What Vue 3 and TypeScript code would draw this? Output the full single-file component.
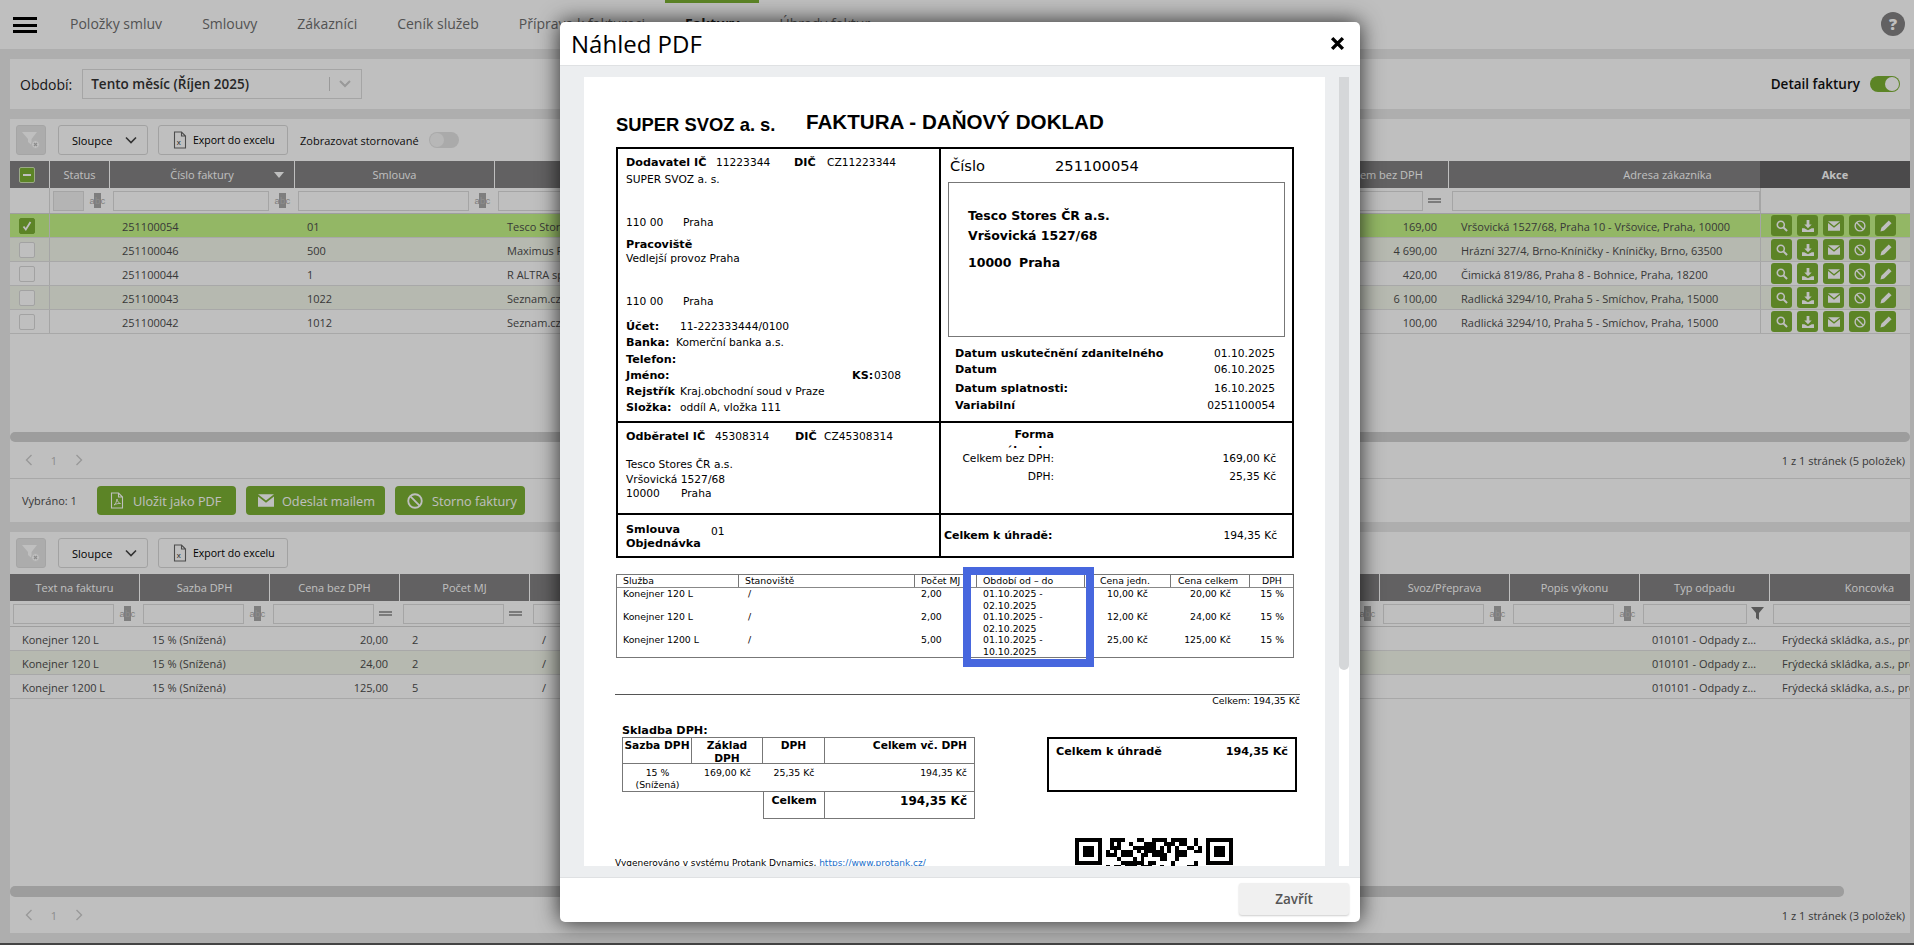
<script setup lang="ts">
interface Col { label: string; filter: '' | 'abc' | 'eq' | 'fun' | 'none'; align?: string }

const navItems = ['Položky smluv', 'Smlouvy', 'Zákazníci', 'Ceník služeb', 'Příprava k fakturaci', 'Faktury', 'Úhrady faktur']

const upperCols: Col[] = [
  { label: 'Status', filter: 'abc' },
  { label: 'Číslo faktury', filter: 'abc' },
  { label: 'Smlouva', filter: 'abc' },
  { label: 'Zákazník', filter: 'abc' },
  { label: 'Celkem bez DPH', filter: 'eq', align: 'r' },
  { label: 'Adresa zákazníka', filter: '' },
]
const upperRows = [
  ['', '251100054', '01', 'Tesco Stores ČR a.s.', '169,00', 'Vršovická 1527/68, Praha 10 - Vršovice, Praha, 10000'],
  ['', '251100046', '500', 'Maximus Facility s.r.o.', '4 690,00', 'Hrázní 327/4, Brno-Kníničky - Kníničky, Brno, 63500'],
  ['', '251100044', '1', 'R ALTRA spol. s r.o.', '420,00', 'Čimická 819/86, Praha 8 - Bohnice, Praha, 18200'],
  ['', '251100043', '1022', 'Seznam.cz, a.s.', '6 100,00', 'Radlická 3294/10, Praha 5 - Smíchov, Praha, 15000'],
  ['', '251100042', '1012', 'Seznam.cz, a.s.', '100,00', 'Radlická 3294/10, Praha 5 - Smíchov, Praha, 15000'],
]
const lowerCols: Col[] = [
  { label: 'Text na fakturu', filter: 'abc' },
  { label: 'Sazba DPH', filter: 'abc' },
  { label: 'Cena bez DPH', filter: 'eq', align: 'r' },
  { label: 'Počet MJ', filter: 'eq' },
  { label: 'Stanoviště', filter: 'abc' },
  { label: 'Svoz/Přeprava', filter: 'abc' },
  { label: 'Popis výkonu', filter: 'abc' },
  { label: 'Typ odpadu', filter: 'fun' },
  { label: 'Koncovka', filter: '' },
]
const waste = '010101 - Odpady z ...'
const end = 'Frýdecká skládka, a.s., provozovna Lipina'
const lowerRows = [
  ['Konejner 120 L', '15 % (Snížená)', '20,00', '2', ' /', '', '', waste, end],
  ['Konejner 120 L', '15 % (Snížená)', '24,00', '2', ' /', '', '', waste, end],
  ['Konejner 1200 L', '15 % (Snížená)', '125,00', '5', ' /', '', '', waste, end],
]

const itemRows = [
  { name: 'Konejner 120 L', qty: '2,00', from: '01.10.2025 -', to: '02.10.2025', unit: '10,00 Kč', sum: '20,00 Kč' },
  { name: 'Konejner 120 L', qty: '2,00', from: '01.10.2025 -', to: '02.10.2025', unit: '12,00 Kč', sum: '24,00 Kč' },
  { name: 'Konejner 1200 L', qty: '5,00', from: '01.10.2025 -', to: '10.10.2025', unit: '25,00 Kč', sum: '125,00 Kč' },
]

// QR code modules: finder squares plus a seeded pseudo-random fill
function buildQr(n: number): string {
  let seed = 90210
  const rnd = () => {
    seed = (seed * 1103515245 + 12345) & 0x7fffffff
    return (seed >> 16) & 1
  }
  const finder = (x: number, y: number, ox: number, oy: number) => {
    const i = x - ox
    const j = y - oy
    if (i < 0 || j < 0 || i > 6 || j > 6) return -1
    const ring = i === 0 || j === 0 || i === 6 || j === 6
    const core = i >= 2 && i <= 4 && j >= 2 && j <= 4
    return ring || core ? 1 : 0
  }
  let d = ''
  for (let y = 0; y < n; y++) {
    for (let x = 0; x < n; x++) {
      let v = -1
      for (const [ox, oy] of [[0, 0], [n - 7, 0], [0, n - 7]]) {
        const f = finder(x, y, ox, oy)
        if (f >= 0) v = f
      }
      const quiet = (x <= 7 && y <= 7) || (x >= n - 8 && y <= 7) || (x <= 7 && y >= n - 8)
      if (v < 0) v = quiet ? 0 : rnd()
      if (v) d += `M${x} ${y}h1v1h-1z`
    }
  }
  return d
}
const qrPath = buildQr(41)
</script>

<template>
  <div class="page">
    <nav class="nav">
      <div class="burger"><i></i><i></i><i></i></div>
      <a v-for="n in navItems" :key="n" class="nav-item" :class="{ active: n === 'Faktury' }">{{ n }}</a>
      <div class="help">?</div>
    </nav>

    <div class="content">
      <section class="panel period">
        <span class="period-label">Období:</span>
        <div class="select">
          <span class="select-text">Tento měsíc (Říjen 2025)</span>
          <span class="select-sep"></span>
          <svg width="14" height="14" viewBox="0 0 14 14" class="select-chev"><path d="M2 4l5 5 5-5" fill="none" stroke="#ccc" stroke-width="2"/></svg>
        </div>
        <div class="detail">
          <span>Detail faktury</span>
          <span class="toggle on"><i></i></span>
        </div>
      </section>

      <section class="panel grid-panel upper">
        <div class="toolbar">
          <button class="filter-btn">
            <svg width="18" height="18" viewBox="0 0 18 18"><path d="M0 1h15L9.500 8v6L6 11V8z" fill="#fff"/><circle cx="13.500" cy="13.500" r="4" fill="#fff" stroke="#e5e5e5"/><path d="M12 12l3 3m0-3l-3 3" stroke="#bbb" stroke-width="1.200"/></svg>
          </button>
          <button class="tool-btn sloupce">Sloupce
            <svg width="12" height="12" viewBox="0 0 12 12"><path d="M1 3.500l5 5 5-5" fill="none" stroke="#444" stroke-width="1.600"/></svg>
          </button>
          <button class="tool-btn export">
            <svg width="14" height="18" viewBox="0 0 14 18"><path d="M1.500 1h7l4 4v12h-11zM8.500 1v4h4" fill="none" stroke="#666" stroke-width="1.100"/><text x="3.800" y="14" font-size="8" fill="#333" font-family="Liberation Sans, sans-serif">x</text></svg>
            Export do excelu
          </button>
          <span class="storno-label">Zobrazovat stornované</span>
          <span class="toggle"><i></i></span>
        </div>

        <div class="row head">
          <div class="c chk-c"><span class="box mixed"><i></i></span></div>
          <div v-for="c in upperCols" :key="c.label" class="c h" :class="{ addr: c.label === 'Adresa zákazníka', bez: c.label === 'Celkem bez DPH' }">
            {{ c.label }}
            <span v-if="c.label === 'Číslo faktury'" class="caret"></span>
          </div>
          <div class="c h akce">Akce</div>
        </div>
        <div class="row filt">
          <div class="c chk-c"></div>
          <div v-for="(c, i) in upperCols" :key="c.label" class="c f">
            <span class="inp" :class="{ dis: i === 0 }"></span>
            <span v-if="c.filter === 'abc'" class="abc">a<b>b</b>c</span>
            <span v-if="c.filter === 'eq'" class="eq"></span>
          </div>
          <div class="c sticky"></div>
        </div>
        <div v-for="(r, ri) in upperRows" :key="ri" class="row data" :class="{ sel: ri === 0, alt: ri % 2 === 1 }">
          <div class="c chk-c">
            <span class="box" :class="{ checked: ri === 0 }">
              <svg v-if="ri === 0" width="12" height="12" viewBox="0 0 12 12"><path d="M2.500 6.500l2.300 3L9.500 2" fill="none" stroke="#fff" stroke-width="1.800"/></svg>
            </span>
          </div>
          <div v-for="(v, i) in r" :key="i" class="c d" :class="{ r: upperCols[i].align === 'r' }">{{ v }}</div>
          <div class="c sticky actions">
            <span class="act"><svg width="12" height="12" viewBox="0 0 13 13"><circle cx="5.200" cy="5.200" r="3.800" fill="none" stroke="#fff" stroke-width="1.700"/><path d="M8 8l4 4" stroke="#fff" stroke-width="2.200"/></svg></span>
            <span class="act"><svg width="12" height="12" viewBox="0 0 13 13"><path d="M5 0h3v5h2.500L6.500 9 2.500 5H5zM0 9h2.500l4 2 4-2H13v4H0z" fill="#fff"/></svg></span>
            <span class="act"><svg width="12" height="10" viewBox="0 0 14 11"><path d="M0 0h14L7 5.500zM0 2l7 5.500L14 2v9H0z" fill="#fff"/></svg></span>
            <span class="act"><svg width="12" height="12" viewBox="0 0 13 13"><circle cx="6.500" cy="6.500" r="5.300" fill="none" stroke="#fff" stroke-width="1.500"/><path d="M2.800 2.800l7.400 7.400" stroke="#fff" stroke-width="1.500"/></svg></span>
            <span class="act"><svg width="12" height="12" viewBox="0 0 13 13"><path d="M9.500.5l3 3L4.500 11.500 0.500 12.500l1-4z" fill="#fff"/></svg></span>
          </div>
        </div>
        <div class="spacer"></div>
        <div class="hscroll"><i class="thumb-u"></i></div>
        <div class="pager">
          <span class="pg"><svg width="8" height="12" viewBox="0 0 8 12"><path d="M6.500 1L1.500 6l5 5" fill="none" stroke="#ccc" stroke-width="1.400"/></svg></span>
          <span class="pg num">1</span>
          <span class="pg"><svg width="8" height="12" viewBox="0 0 8 12"><path d="M1.500 1l5 5-5 5" fill="none" stroke="#ccc" stroke-width="1.400"/></svg></span>
          <span class="pg-info">1 z 1 stránek (5 položek)</span>
        </div>
        <div class="actionbar">
          <span class="sel-count">Vybráno: 1</span>
          <button class="gbtn pdf">
            <svg width="14" height="17" viewBox="0 0 14 17"><path d="M1.500 1h7l4 4v11h-11zM8.500 1v4h4" fill="none" stroke="#fff" stroke-width="1.100"/><path d="M4 13c1.500-1 2.500-3 3-6 .5 2.500 1.500 4 3.500 4.500-2-.2-4.500.3-6.500 1.500z" fill="none" stroke="#fff" stroke-width=".9"/></svg>
            Uložit jako PDF
          </button>
          <button class="gbtn mail">
            <svg width="16" height="13" viewBox="0 0 14 11"><path d="M0 0h14L7 5.500zM0 2l7 5.500L14 2v9H0z" fill="#fff"/></svg>
            Odeslat mailem
          </button>
          <button class="gbtn storno">
            <svg width="16" height="16" viewBox="0 0 13 13"><circle cx="6.500" cy="6.500" r="5.500" fill="none" stroke="#fff" stroke-width="1.500"/><path d="M2.800 2.800l7.400 7.400" stroke="#fff" stroke-width="1.500"/></svg>
            Storno faktury
          </button>
        </div>
      </section>

      <section class="panel grid-panel lower">
        <div class="toolbar">
          <button class="filter-btn">
            <svg width="18" height="18" viewBox="0 0 18 18"><path d="M0 1h15L9.500 8v6L6 11V8z" fill="#fff"/><circle cx="13.500" cy="13.500" r="4" fill="#fff" stroke="#e5e5e5"/><path d="M12 12l3 3m0-3l-3 3" stroke="#bbb" stroke-width="1.200"/></svg>
          </button>
          <button class="tool-btn sloupce">Sloupce
            <svg width="12" height="12" viewBox="0 0 12 12"><path d="M1 3.500l5 5 5-5" fill="none" stroke="#444" stroke-width="1.600"/></svg>
          </button>
          <button class="tool-btn export">
            <svg width="14" height="18" viewBox="0 0 14 18"><path d="M1.500 1h7l4 4v12h-11zM8.500 1v4h4" fill="none" stroke="#666" stroke-width="1.100"/><text x="3.800" y="14" font-size="8" fill="#333" font-family="Liberation Sans, sans-serif">x</text></svg>
            Export do excelu
          </button>
        </div>
        <div class="row head">
          <div v-for="c in lowerCols" :key="c.label" class="c h">{{ c.label }}</div>
        </div>
        <div class="row filt">
          <div v-for="c in lowerCols" :key="c.label" class="c f">
            <span class="inp"></span>
            <span v-if="c.filter === 'abc'" class="abc">a<b>b</b>c</span>
            <span v-if="c.filter === 'eq'" class="eq"></span>
            <svg v-if="c.filter === 'fun'" class="fun" width="13" height="13" viewBox="0 0 13 13"><path d="M0 0h13L8 6v7L5 11V6z" fill="#777"/></svg>
          </div>
        </div>
        <div v-for="(r, ri) in lowerRows" :key="ri" class="row data" :class="{ alt: ri === 1 }">
          <div v-for="(v, i) in r" :key="i" class="c d" :class="{ r: lowerCols[i].align === 'r' }">{{ v }}</div>
        </div>
        <div class="spacer"></div>
        <div class="hscroll low"><i class="thumb-l"></i></div>
        <div class="pager">
          <span class="pg"><svg width="8" height="12" viewBox="0 0 8 12"><path d="M6.500 1L1.500 6l5 5" fill="none" stroke="#ccc" stroke-width="1.400"/></svg></span>
          <span class="pg num">1</span>
          <span class="pg"><svg width="8" height="12" viewBox="0 0 8 12"><path d="M1.500 1l5 5-5 5" fill="none" stroke="#ccc" stroke-width="1.400"/></svg></span>
          <span class="pg-info">1 z 1 stránek (3 položek)</span>
        </div>
      </section>
    </div>
    <div class="base-line"></div>

    <div class="overlay"></div>

    <div class="modal">
      <header class="m-head">
        <h2>Náhled PDF</h2>
        <svg class="close" width="15" height="15" viewBox="0 0 14 14"><path d="M2 2l10 10M12 2L2 12" stroke="#000" stroke-width="3.200"/></svg>
      </header>
      <div class="m-body">
        <div class="sheet">
          <div class="titles">
            <span class="t-firm">SUPER SVOZ a. s.</span>
            <span class="t-doc">FAKTURA - DAŇOVÝ DOKLAD</span>
          </div>
          <div class="inv">
            <div class="cell pad-a">
              <div class="ln"><b class="w90">Dodavatel IČ</b><span class="w78">11223344</span><b class="w33">DIČ</b><span>CZ11223344</span></div>
              <div class="ln m1">SUPER SVOZ a. s.</div>
              <div class="ln m27"><span class="w57">110 00</span><span>Praha</span></div>
              <div class="ln m6"><b>Pracoviště</b></div>
              <div class="ln mn2">Vedlejší provoz Praha</div>
              <div class="ln m27"><span class="w57">110 00</span><span>Praha</span></div>
              <div class="ln m9"><b class="w54">Účet:</b><span>11-222333444/0100</span></div>
              <div class="ln"><b class="w50">Banka:</b><span>Komerční banka a.s.</span></div>
              <div class="ln m1"><b>Telefon:</b></div>
              <div class="ln"><b class="w226">Jméno:</b><b class="w22">KS:</b><span>0308</span></div>
              <div class="ln"><b class="w54">Rejstřík</b><span>Kraj.obchodní soud v Praze</span></div>
              <div class="ln"><b class="w54">Složka:</b><span>oddíl A, vložka 111</span></div>
            </div>
            <div class="cell last">
              <div class="num-line"><span class="w105">Číslo</span><span>251100054</span></div>
              <div class="addr-box">
                <div class="ln big"><b>Tesco Stores ČR a.s.</b></div>
                <div class="ln big m4"><b>Vršovická 1527/68</b></div>
                <div class="ln big m11"><b class="w51">10000</b><b>Praha</b></div>
              </div>
              <div class="dates">
                <div class="ln dt"><b>Datum uskutečnění zdanitelného</b><span>01.10.2025</span></div>
                <div class="ln dt"><b>Datum</b><span>06.10.2025</span></div>
                <div class="ln dt m3"><b>Datum splatnosti:</b><span>16.10.2025</span></div>
                <div class="ln dt m1"><b>Variabilní</b><span>0251100054</span></div>
              </div>
            </div>
            <div class="cell pad-a">
              <div class="ln"><b class="w89">Odběratel IČ</b><span class="w80">45308314</span><b class="w29">DIČ</b><span>CZ45308314</span></div>
              <div class="ln m12">Tesco Stores ČR a.s.</div>
              <div class="ln mn1">Vršovická 1527/68</div>
              <div class="ln mn2"><span class="w55">10000</span><span>Praha</span></div>
            </div>
            <div class="cell last pay">
              <div class="forma"><b>Forma<br>úhrady:</b></div>
              <div class="ln sumr m3"><span class="lbl">Celkem bez DPH:</span><span class="val">169,00 Kč</span></div>
              <div class="ln sumr m2"><span class="lbl">DPH:</span><span class="val">25,35 Kč</span></div>
            </div>
            <div class="cell pad-a contract">
              <div class="ln"><b class="w85">Smlouva</b><span class="ref">01</span></div>
              <div class="ln mn2"><b>Objednávka</b></div>
            </div>
            <div class="cell last to-pay">
              <b>Celkem k úhradě:</b>
              <span>194,35 Kč</span>
            </div>
          </div>

          <div class="items">
            <div class="it-row it-head">
              <div>Služba</div><div>Stanoviště</div><div class="clip">Počet MJ</div><div>Období od – do</div><div class="ci">Cena jedn.</div><div class="cc">Cena celkem</div><div class="cd">DPH</div>
            </div>
            <div v-for="(it, i) in itemRows" :key="i" class="it-row it-body">
              <div>{{ it.name }}</div><div class="slash">/</div><div>{{ it.qty }}</div>
              <div>{{ it.from }}<br>{{ it.to }}</div>
              <div class="rr r1">{{ it.unit }}</div><div class="rr r2">{{ it.sum }}</div><div class="rr r3">15 %</div>
            </div>
            <div class="highlight"></div>
          </div>

          <div class="sum-line">Celkem: 194,35 Kč</div>

          <div class="vat-title"><b>Skladba DPH:</b></div>
          <div class="vat-wrap">
            <div class="vat">
              <div class="v hd">Sazba DPH</div>
              <div class="v hd">Základ<br>DPH</div>
              <div class="v hd">DPH</div>
              <div class="v hd right">Celkem vč. DPH</div>
              <div class="v bd nob">15 %<br>(Snížená)</div>
              <div class="v bd nob">169,00 Kč</div>
              <div class="v bd nob">25,35 Kč</div>
              <div class="v bd right">194,35 Kč</div>
              <div class="v empty"></div>
              <div class="v empty"></div>
              <div class="v tot">Celkem</div>
              <div class="v tot right big-t">194,35 Kč</div>
            </div>
            <div class="pay-box"><b>Celkem k úhradě</b><b>194,35 Kč</b></div>
          </div>

          <div class="sheet-foot">
            <div class="gen">Vygenerováno v systému Protank Dynamics, <a>https://www.protank.cz/</a></div>
            <svg class="qr" width="158" height="158" viewBox="0 0 41 41" shape-rendering="crispEdges"><path :d="qrPath" fill="#000"/></svg>
          </div>
        </div>
        <div class="v-track"><i></i></div>
      </div>
      <footer class="m-foot">
        <button class="close-btn">Zavřít</button>
      </footer>
    </div>
  </div>
</template>

<style scoped>
.page { position: relative; width: 1914px; height: 945px; overflow: hidden; background: #e8e8e8; display: flex; flex-direction: column; font-family: "Open Sans", sans-serif; color: #5a5a5a; font-size: 11px; }
button { font-family: inherit; cursor: pointer; }

.nav { height: 49px; background: #fff; display: flex; align-items: stretch; padding-left: 13px; flex: none; }
.burger { width: 24px; margin-right: 13px; display: flex; flex-direction: column; gap: 3.500px; padding-top: 17px; }
.burger i { display: block; height: 3px; background: #000; }
.nav-item { padding: 0 20px; font-size: 14px; color: #6e6e6e; line-height: 41px; border-top: 3px solid transparent; white-space: nowrap; }
.nav-item.active { border-top-color: #7bb133; font-weight: 700; color: #222; }
.help { margin-left: auto; margin-right: 9px; margin-top: 12px; width: 24px; height: 24px; border-radius: 50%; background: #838283; color: #fff; font-weight: 800; font-size: 16px; line-height: 24px; text-align: center; }

.content { flex: 1; display: flex; flex-direction: column; gap: 10px; padding: 10px 4px 10px 10px; min-height: 0; }
.panel { background: #fff; }
.period { height: 50px; flex: none; display: flex; align-items: center; padding: 0 10px; }
.period-label { font-size: 14px; color: #222; }
.select { margin-left: 10px; width: 280px; height: 30px; box-sizing: border-box; border: 1px solid #ddd; display: flex; align-items: center; padding-left: 8px; }
.select-text { font-size: 13.500px; font-weight: 600; color: #333; flex: 1; white-space: nowrap; }
.select-sep { width: 1px; height: 14px; background: #ccc; margin-right: 8px; }
.select-chev { margin-right: 9px; }
.detail { margin-left: auto; display: flex; align-items: center; gap: 10px; font-size: 13.500px; font-weight: 600; color: #111; }
.toggle { display: inline-block; width: 30px; height: 16px; border-radius: 8px; background: #e3e3e3; position: relative; }
.toggle i { position: absolute; left: 1px; top: 1px; width: 14px; height: 14px; border-radius: 50%; background: #f4f4f4; }
.toggle.on { background: #7bb133; }
.toggle.on i { left: 15px; background: #fff; }

.grid-panel { display: flex; flex-direction: column; overflow: hidden; min-height: 0; }
.upper { height: 403px; flex: none; }
.lower { flex: 1; }
.toolbar { height: 42px; flex: none; display: flex; align-items: center; padding-left: 6px; }
.filter-btn { width: 30px; height: 30px; border: 1px solid #ddd; border-radius: 3px; background: #e6e6e6; padding: 0 0 0 5px; display: flex; align-items: center; }
.tool-btn { height: 30px; border: 1px solid #d9d9d9; border-radius: 3px; background: #fff; font-size: 11px; color: #000; display: flex; align-items: center; padding: 0; }
.sloupce { margin-left: 12px; width: 90px; padding-left: 13px; gap: 13px; }
.export { margin-left: 10px; width: 130px; padding-left: 14px; gap: 6px; font-size: 10.500px; }
.storno-label { margin-left: 12px; margin-right: 10px; color: #111; font-size: 11px; white-space: nowrap; }

.row { display: grid; flex: none; }
.upper .row { grid-template-columns: 40px 60px 185px 200px 788px 166px 311px 150px; }
.lower .row { grid-template-columns: 130px 130px 130px 130px 850px 130px 130px 130px 200px; }
.head { height: 27px; background: #838283; }
.c { min-width: 0; box-sizing: border-box; }
.h { color: #fff; font-size: 11px; display: flex; align-items: center; justify-content: center; border-right: 1px solid #fff; position: relative; white-space: nowrap; overflow: hidden; }
.h.addr { padding-left: 126px; border-right: 0; }
.h.bez { padding-left: 30px; }
.akce { background: #646364; font-weight: 700; border-right: 0; }
.caret { position: absolute; right: 10px; top: 11px; border: 5px solid transparent; border-top: 6px solid #fff; border-bottom: 0; }
.chk-c { display: flex; align-items: center; justify-content: center; border-right: 1px solid #ddd; padding-right: 5px; }
.head .chk-c { border-right-color: #fff; }
.box { width: 16px; height: 16px; box-sizing: border-box; border: 1px solid #d9d9d9; border-radius: 2px; background: #fff; display: flex; align-items: center; justify-content: center; }
.box.checked { background: #7bb133; border-color: #7bb133; }
.box.mixed { background: #7bb133; border: 1.500px solid #cfe3b4; }
.box.mixed i { width: 8px; height: 2px; background: #fff; }

.filt { border-bottom: 1px solid #d4d4d4; box-sizing: content-box; }
.upper .filt { height: 25px; }
.lower .filt { height: 25px; }
.f { display: flex; align-items: center; padding-left: 3px; }
.inp { flex: 1; height: 20px; box-sizing: border-box; border: 1px solid #dcdcdc; background: #fff; min-width: 0; }
.inp.dis { background: #f0f0f0; border-color: #ddd; }
.abc { width: 26px; flex: none; text-align: center; font-size: 9.500px; color: #a8a8a8; letter-spacing: -.8px; line-height: 14px; font-family: "Liberation Sans", sans-serif; }
.abc b { background: #a8a8a8; color: #bdbdbd; font-weight: 400; padding: 2px 1px; }
.eq { width: 13px; height: 5px; flex: none; margin: 0 8px 0 5px; border-top: 2px solid #a5a5a5; border-bottom: 2px solid #a5a5a5; box-sizing: border-box; }
.fun { margin: 0 6px 0 4px; flex: none; }
.sticky { border-left: 1px solid #ddd; }

.data { height: 24px; border-bottom: 1px solid #e0e0e0; box-sizing: border-box; }
.data.alt { background: #f3f7eb; }
.data.sel { background: #c5f587; }
.d { padding: 0 12px; line-height: 25px; height: 23px; font-size: 11px; color: #4c4c4c; white-space: nowrap; overflow: hidden; text-overflow: ellipsis; }
.d.r { text-align: right; }
.actions { display: flex; align-items: center; gap: 5px; padding-left: 10px; }
.act { width: 21px; height: 21px; border-radius: 3px; background: #7bb133; display: flex; align-items: center; justify-content: center; flex: none; }

.spacer { flex: 1; }
.hscroll { height: 10px; flex: none; background: #fff; }
.hscroll i { display: block; height: 100%; background: #d2d2d2; border-radius: 5px; }
.hscroll.low { height: 11px; }
.thumb-l { width: 1834px; }
.pager { height: 37px; flex: none; display: flex; align-items: center; border-bottom: 1px solid #e0e0e0; box-sizing: border-box; color: #999; }
.lower .pager { border-bottom: 0; height: 36px; }
.pg { display: flex; align-items: center; justify-content: center; width: 16px; margin-left: 9px; }
.pg:first-child { margin-left: 11px; }
.num { font-size: 11px; color: #bbb; }
.pg-info { margin-left: auto; margin-right: 5px; color: #4c4c4c; font-size: 11px; }
.actionbar { height: 43px; flex: none; display: flex; align-items: center; padding-left: 12px; }
.sel-count { color: #4c4c4c; font-size: 11px; width: 75px; }
.gbtn { height: 29px; border: 0; border-radius: 4px; background: #7bb133; color: #fff; font-size: 12.700px; display: flex; align-items: center; margin-right: 10px; padding: 0 0 0 13px; gap: 9px; white-space: nowrap; }
.pdf { width: 139px; }
.mail { width: 139px; padding-left: 12px; gap: 8px; }
.storno { width: 130px; padding-left: 12px; gap: 9px; }

.base-line { height: 2px; background: #5b5b5b; flex: none; }
.overlay { position: absolute; inset: 0; background: rgba(0, 0, 0, .25); }

.modal { position: absolute; left: 560px; top: 22px; width: 800px; height: 900px; background: #fff; border-radius: 5px; box-shadow: 0 0 22px rgba(0, 0, 0, .8); display: flex; flex-direction: column; overflow: hidden; font-family: "DejaVu Sans", sans-serif; color: #000; }
.m-head { height: 43px; flex: none; border-bottom: 1px solid #dfe1e3; display: flex; align-items: center; justify-content: space-between; padding: 0 15px 0 11px; }
.m-head h2 { margin: 0; font-family: "Open Sans", sans-serif; font-weight: 400; font-size: 24px; color: #000; }
.m-body { height: 811px; flex: none; background: #eceef0; display: flex; padding: 11px 11px 11px 24px; box-sizing: border-box; gap: 14px; }
.sheet { width: 741px; background: #fff; flex: none; overflow: hidden; padding: 37px 0 0 32px; box-sizing: border-box; font-size: 10.670px; line-height: 16px; }
.sheet b { font-size: 11.200px; }
.v-track { width: 10px; background: #fff; flex: none; }
.v-track i { display: block; height: 593px; border-radius: 0 0 5px 5px; background: #d5d7d9; }
.m-foot { flex: 1; border-top: 1px solid #dfe1e3; display: flex; align-items: flex-start; justify-content: flex-end; padding: 5px 11px 0 0; }
.close-btn { width: 110px; height: 32px; border: 0; border-radius: 3px; background: #f0f0f0; box-shadow: 0 1px 2px rgba(0, 0, 0, .2); font-family: "Open Sans", sans-serif; font-size: 13.500px; font-weight: 600; color: #555; }

.titles { height: 20px; display: flex; white-space: nowrap; font-family: "Liberation Sans", sans-serif; font-weight: 700; color: #000; line-height: 20px; margin-bottom: 13px; }
.t-firm { font-size: 18.400px; width: 190px; position: relative; top: 1px; }
.t-doc { font-size: 20.600px; position: relative; top: -2px; }

.inv { width: 678px; box-sizing: border-box; border-top: 2px solid #000; border-left: 2px solid #000; display: grid; grid-template-columns: 323px 353px; grid-template-rows: 274px 92px 43px; height: 411px; }
.cell { border-right: 2px solid #000; border-bottom: 2px solid #000; box-sizing: border-box; min-width: 0; overflow: hidden; }
.pad-a { padding: 6px 0 0 8px; }
.ln { height: 16px; line-height: 16px; display: flex; white-space: nowrap; }
.m1 { margin-top: 1px; } .m2 { margin-top: 2px; } .m3 { margin-top: 3px; } .m4 { margin-top: 4px; }
.m6 { margin-top: 6px; } .m9 { margin-top: 9px; } .m11 { margin-top: 11px; } .m12 { margin-top: 12px; } .m27 { margin-top: 27px; }
.mn1 { margin-top: -1px; } .mn2 { margin-top: -2px; }
.w22 { width: 22px; } .w29 { width: 29px; } .w33 { width: 33px; } .w50 { width: 50px; } .w51 { width: 51px; } .w54 { width: 54px; } .w55 { width: 55px; } .w57 { width: 57px; }
.w78 { width: 78px; } .w80 { width: 80px; } .w85 { width: 85px; } .w89 { width: 89px; } .w90 { width: 90px; } .w105 { width: 105px; } .w226 { width: 226px; }

.num-line { height: 18px; line-height: 18px; margin: 8px 0 0 9px; font-size: 14.670px; display: flex; }
.addr-box { margin: 7px 0 0 7px; width: 337px; height: 155px; box-sizing: border-box; border: 1px solid #777; padding: 25px 0 0 19px; }
.big b { font-size: 12.500px; }
.dates { margin: 9px 0 0 14px; width: 320px; }
.dt { justify-content: space-between; }

.pay { padding-top: 4px; }
.forma { height: 21px; overflow: hidden; width: 113px; text-align: right; }
.sumr .lbl { width: 113px; text-align: right; }
.sumr .val { width: 222px; text-align: right; }
.contract { padding-top: 7px; }
.ref { position: relative; top: 2px; }
.to-pay { display: flex; align-items: center; justify-content: space-between; padding: 0 15px 0 3px; font-size: 10.670px; }
.to-pay b { font-size: 11px; }

.items { position: relative; width: 678px; margin-top: 16px; height: 84px; box-sizing: border-box; border: 1px solid #777; font-size: 9.330px; line-height: 12px; }
.it-row { display: grid; grid-template-columns: 122px 176px 62px 108px 86px 79px 43px; white-space: nowrap; }
.it-head { height: 13px; border-bottom: 1px solid #888; box-sizing: border-box; }
.it-head > div { border-right: 1px solid #777; padding-left: 6px; overflow: hidden; }
.it-head > div:last-child { border-right: 0; }
.it-head .ci { padding-left: 15px; }
.it-head .cc { padding-left: 7px; }
.it-head .cd { padding-left: 12px; }
.it-body { height: 23px; }
.it-body > div { padding-left: 6px; }
.slash { padding-left: 9px !important; }
.rr { text-align: right; padding-left: 0 !important; }
.r1 { padding-right: 23px; } .r2 { padding-right: 19px; } .r3 { padding-right: 9px; }
.highlight { position: absolute; left: 346px; top: -8px; width: 131px; height: 100px; box-sizing: border-box; border: 8px solid #4767de; }

.sum-line { width: 685px; margin: 36px 0 0 -1px; border-top: 1px solid #555; text-align: right; font-size: 9.330px; line-height: 12px; height: 29px; box-sizing: border-box; }
.vat-title { height: 14px; margin-left: 6px; }
.vat-wrap { display: flex; margin-left: 6px; height: 82px; align-items: flex-start; }
.vat { width: 353px; display: grid; grid-template-columns: 70px 71px 62px 150px; grid-template-rows: 27px 28px 27px; box-sizing: border-box; flex: none; }
.v { box-sizing: border-box; border-right: 1px solid #777; border-bottom: 1px solid #777; text-align: center; line-height: 13px; padding-top: 1px; min-width: 0; }
.vat > .v:nth-child(1), .vat > .v:nth-child(5) { border-left: 1px solid #777; }
.vat > .v:nth-child(-n+4) { border-top: 1px solid #777; }
.hd { font-weight: 700; font-size: 10.670px; }
.bd { font-size: 9.330px; line-height: 12px; padding-top: 3px; }
.nob { border-right: 0; }
.right { text-align: right; padding-right: 7px; }
.empty { border: 0; }
.tot { font-weight: 700; font-size: 11px; line-height: 16px; }
.vat > .tot:nth-child(11) { border-left: 1px solid #777; }
.big-t { font-size: 12px; }
.pay-box { margin-left: 72px; width: 250px; height: 55px; box-sizing: border-box; border: 2px solid #000; padding: 5px 7px 0; display: flex; justify-content: space-between; }

.sheet-foot { display: flex; margin: 19px 0 0 -1px; }
.gen { width: 460px; flex: none; padding-top: 17px; font-size: 9px; white-space: nowrap; }
.gen a { color: #1a6ec9; text-decoration: underline; }
.qr { flex: none; }
</style>

<style>
html, body { margin: 0; padding: 0; overflow: hidden; }
</style>
